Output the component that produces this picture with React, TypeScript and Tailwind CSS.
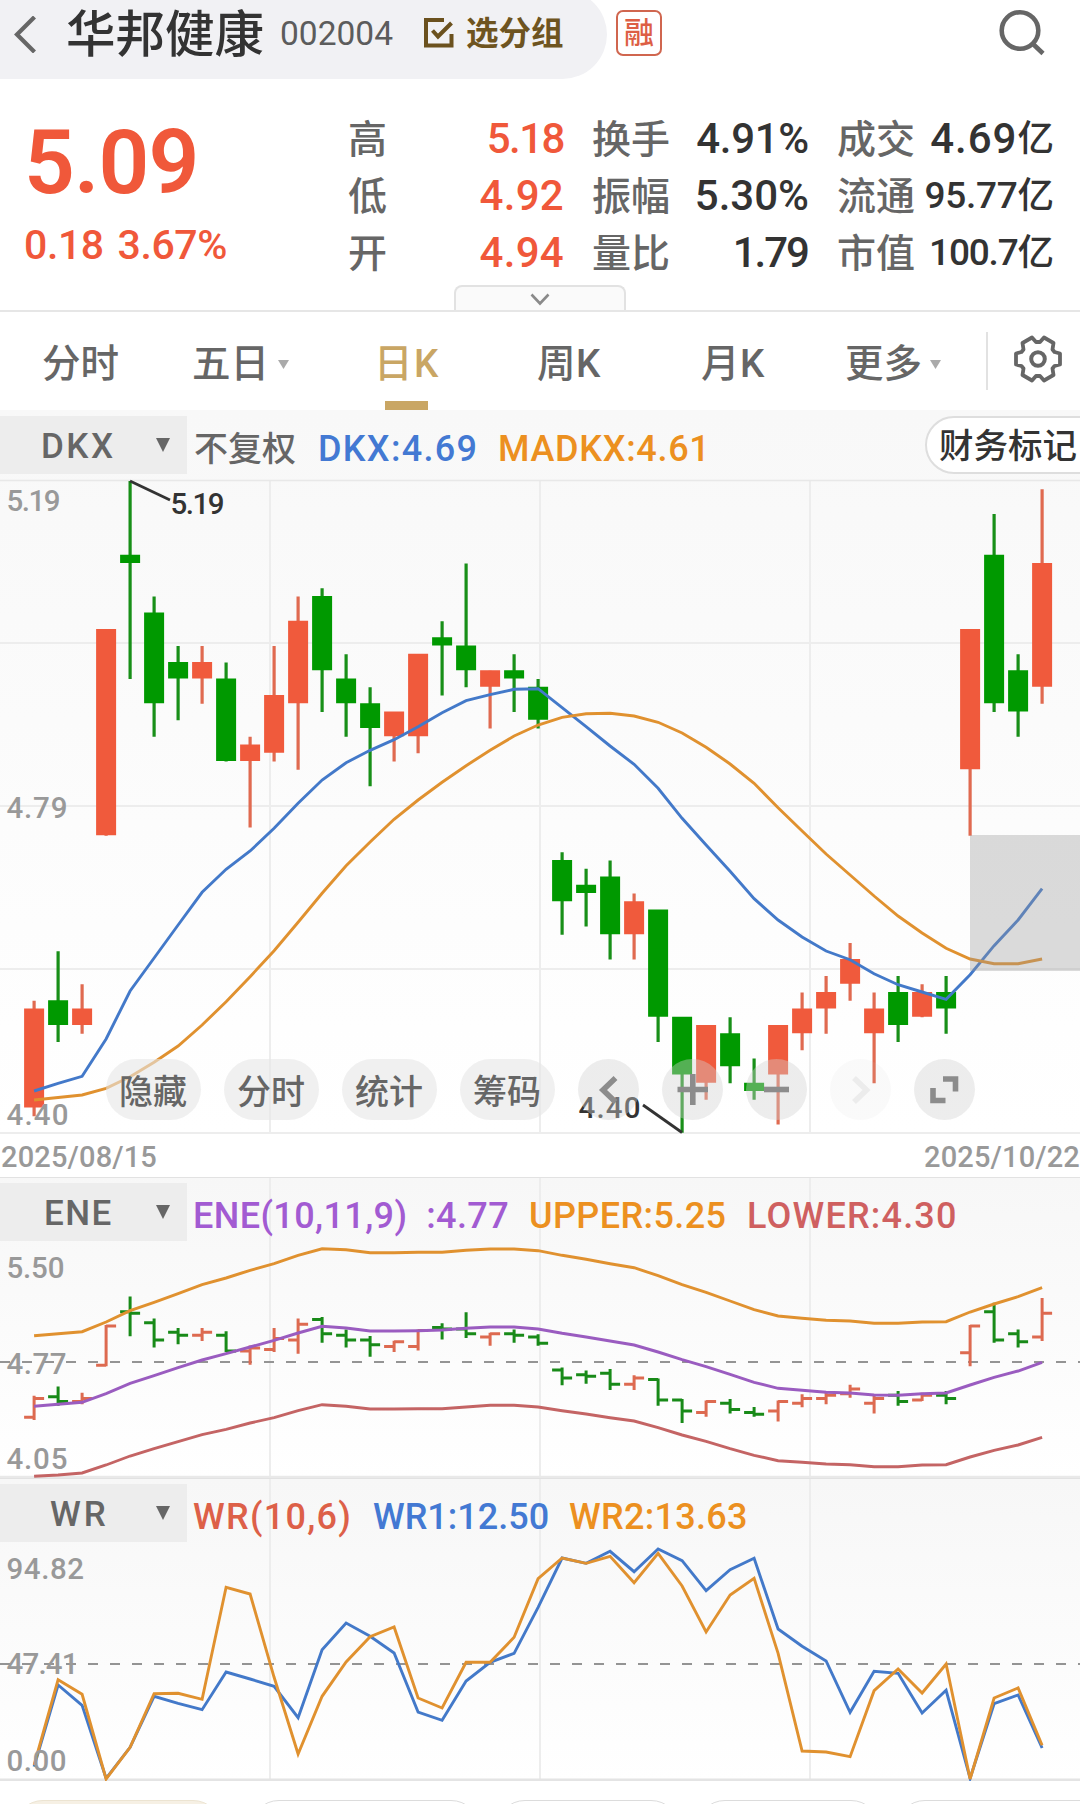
import React from "react";

const RED = "#f05a3c";
const GREEN = "#009900";
const BLUE = "#4379c9";
const ORANGE = "#e0912f";
const GRID = "#ededed";

type Candle = [rising: boolean, high: number, top: number, bottom: number, low: number];

// Distances are counted in ticks of 0.01 below 5.19.
const R = true;
const G = false;
const candles: Candle[] = [
  [R, 63, 64, 76, 77], [G, 57, 63, 66, 68], [R, 61, 64, 66, 67], [R, 18, 18, 43, 43],
  [G, 0, 9, 10, 24], [G, 14, 16, 27, 31], [G, 20, 22, 24, 29], [R, 20, 22, 24, 27],
  [G, 22, 24, 34, 34], [R, 31, 32, 34, 42], [R, 20, 26, 33, 34], [R, 14, 17, 27, 35],
  [G, 13, 14, 23, 28], [G, 21, 24, 27, 31], [G, 25, 27, 30, 37], [R, 28, 28, 31, 34],
  [R, 21, 21, 31, 33], [G, 17, 19, 20, 26], [G, 10, 20, 23, 25], [R, 23, 23, 25, 30],
  [G, 21, 23, 24, 28], [G, 24, 25, 29, 30], [G, 45, 46, 51, 55], [G, 47, 49, 50, 54],
  [G, 46, 48, 55, 58], [R, 50, 51, 55, 58], [G, 52, 52, 65, 68], [G, 65, 65, 72, 79],
  [R, 66, 66, 73, 75], [G, 65, 67, 71, 73], [G, 70, 73, 74, 75], [R, 66, 66, 72, 78],
  [R, 62, 64, 67, 69], [R, 60, 62, 64, 67], [R, 56, 58, 61, 63], [R, 62, 64, 67, 73],
  [G, 60, 62, 66, 68], [R, 61, 62, 65, 65], [G, 60, 62, 64, 67], [R, 18, 18, 35, 43],
  [G, 4, 9, 27, 28], [G, 21, 23, 28, 31], [R, 1, 10, 25, 27],
];

const dkx = [
  1091, 1083.3, 1076.3, 1039, 991, 958, 925, 892.3, 869.3, 851, 828.3, 803.3, 780, 762.7, 750.3,
  739.7, 726.7, 712.7, 700.7, 694.7, 689.3, 688.7, 707.7, 726.7, 746, 764.3, 788.3, 818.3, 845,
  871.3, 898.7, 920, 937, 951, 959.7, 973.7, 984.7, 992, 999.3, 974.7, 945.7, 920, 888.7,
];
const madkx = [
  1100, 1097.5, 1095, 1088.3, 1076.7, 1062.3, 1046, 1025, 1001.7, 976.7, 950.7, 922.3, 893.3,
  865.7, 842, 819.3, 800, 782.3, 765.7, 750.3, 736, 725, 717.3, 713.7, 713.3, 716, 722.3, 733,
  747.3, 764, 783.3, 807.7, 831, 854, 875, 896, 916, 933, 948.3, 959, 963.7, 963.7, 959,
];
const upper = [
  1335.7, 1333.7, 1331.7, 1322, 1310.7, 1302.3, 1293.7, 1284.7, 1278, 1270.3, 1263.7, 1255.3,
  1248.8, 1249.7, 1252.7, 1252.7, 1252.3, 1252.3, 1250.3, 1249, 1249, 1250.7, 1255.3, 1259.3,
  1263.7, 1267.7, 1275.7, 1284.7, 1292.3, 1301, 1309.7, 1316, 1318.3, 1320.3, 1321, 1323.3,
  1323.3, 1322, 1321.7, 1312, 1304, 1296.7, 1287.7,
];
const ene = [
  1406.3, 1404.3, 1402.3, 1393.7, 1383.3, 1375.7, 1367.7, 1360, 1353.7, 1347, 1340.3, 1333,
  1326.3, 1328, 1331, 1331, 1330.7, 1330, 1328.3, 1327, 1327, 1329, 1333.3, 1337, 1341, 1345,
  1352, 1359.7, 1366.7, 1374.3, 1382.3, 1388.3, 1390.3, 1392.3, 1393, 1395, 1395.3, 1393.7,
  1393, 1385, 1377.3, 1371, 1362.3,
];
const lower = [
  1476.3, 1475, 1473, 1465, 1456, 1448.7, 1441.7, 1434.7, 1429.3, 1423, 1417.7, 1410.7, 1404.7,
  1406.3, 1409, 1409, 1408.7, 1408.7, 1407, 1405.3, 1405.3, 1407, 1410.7, 1414, 1417.7, 1421,
  1427.7, 1435, 1441.3, 1448.7, 1455.3, 1460.7, 1462.3, 1464, 1464.7, 1466.7, 1466.7, 1465,
  1464.7, 1457, 1450.3, 1445, 1437.3,
];
const wr1 = [
  1766.7, 1685, 1705.3, 1778.3, 1747.3, 1696.3, 1703.3, 1709.7, 1672, 1679, 1686.3, 1717.7,
  1649.7, 1623, 1636.3, 1653, 1712, 1720.3, 1681, 1662.3, 1653.3, 1607.3, 1558, 1563.3, 1551.3,
  1571.7, 1549, 1560.7, 1590.7, 1569.7, 1558.3, 1629, 1646.3, 1661, 1712.3, 1671.3, 1673.3,
  1713, 1690.3, 1778.3, 1703.7, 1695, 1748,
];
const wr2 = [
  1765, 1679.7, 1694.3, 1779, 1747.3, 1693.7, 1693.3, 1699.3, 1587.3, 1594, 1677.3, 1754,
  1696.3, 1662, 1636.7, 1627, 1698, 1708, 1662.3, 1662.3, 1637.3, 1578.7, 1558, 1563.3, 1556.3,
  1582.7, 1553.3, 1586, 1632, 1595, 1578.3, 1653.3, 1751, 1752, 1756.7, 1690.7, 1669, 1693,
  1664, 1779, 1698, 1688, 1745.3,
];

const xOf = (i: number) => 34.1 + 24 * i;

function Line({ data, color, width = 2.9 }: { data: number[]; color: string; width?: number }) {
  return (
    <polyline
      points={data.map((y, i) => `${xOf(i)},${y}`).join(" ")}
      fill="none"
      stroke={color}
      strokeWidth={width}
    />
  );
}

function Label({ x, y, w, fill = "#999", children }: { x: number; y: number; w: number; fill?: string; children: string }) {
  return (
    <text x={x} y={y} textLength={w} fontSize={29.5} fontWeight={500} fill={fill}>
      {children}
    </text>
  );
}

function Grid({ top, bottom }: { top: number; bottom: number }) {
  return (
    <g stroke={GRID} strokeWidth={2}>
      {[270, 540, 810].map((x) => (
        <line key={x} x1={x} x2={x} y1={top} y2={bottom} />
      ))}
    </g>
  );
}

function CandleChart() {
  const y = (k: number) => 481 + 8.25 * k;
  return (
    <svg className="absolute inset-0 h-full w-full" viewBox="0 410 1080 767">
      <Grid top={481} bottom={1133} />
      <g stroke={GRID} strokeWidth={2}>
        {[643, 806, 969, 1133].map((v) => (
          <line key={v} x1={0} x2={1080} y1={v} y2={v} />
        ))}
      </g>
      <line x1={0} x2={1080} y1={480.5} y2={480.5} stroke="#e8e8e8" strokeWidth={1.6} />
      {candles.map(([up, h, t, b, l], i) => (
        <g key={i} fill={up ? RED : GREEN}>
          <rect x={xOf(i) - 1.6} y={y(h)} width={3.2} height={y(l) - y(h)} fill={up ? "#e06a50" : "#188f18"} />
          <rect x={xOf(i) - 10} y={y(t) - 0.5} width={20} height={y(b) - y(t)} />
        </g>
      ))}
      <Line data={dkx} color={BLUE} />
      <Line data={madkx} color={ORANGE} />
      <rect x={970} y={835} width={110} height={136} fill="#999" fillOpacity={0.35} />
      <polyline points="130,481 170,500" stroke="#333" strokeWidth={2.8} fill="none" />
      <polyline points="643,1105 682,1132.5" stroke="#333" strokeWidth={2.8} fill="none" />
      <Label x={170.5} y={513.7} w={54} fill="#333">5.19</Label>
      <Label x={578.5} y={1117.7} w={62} fill="#333">4.40</Label>
      <Label x={6.5} y={511} w={54}>5.19</Label>
      <Label x={6.5} y={818} w={61}>4.79</Label>
      <Label x={6.5} y={1125} w={62}>4.40</Label>
    </svg>
  );
}

function EneChart() {
  const y = (k: number) => 1297.5 + 1.577 * k;
  return (
    <svg className="absolute inset-0 h-full w-full" viewBox="0 1178 1080 300">
      <Grid top={1178} bottom={1478} />
      <line x1={0} x2={1080} y1={1477} y2={1477} stroke="#e9e9e9" strokeWidth={2.5} />
      <line x1={0} x2={1080} y1={1362} y2={1362} stroke="#949494" strokeWidth={2} strokeDasharray="10 12" />
      {candles.map(([up, h, t, b, l], i) => {
        const x = xOf(i);
        const open = y(up ? b : t);
        const close = y(up ? t : b);
        return (
          <path
            key={i}
            d={`M${x} ${y(h) - 1}V${y(l) + 1}M${x - 10} ${open}H${x}M${x} ${close}H${x + 10}`}
            stroke={up ? "#dd6a50" : "#188a18"}
            strokeWidth={3}
          />
        );
      })}
      <Line data={upper} color={ORANGE} />
      <Line data={ene} color="#9a5cc0" />
      <Line data={lower} color="#c46464" />
      <Label x={6.5} y={1277.7} w={58}>5.50</Label>
      <Label x={6.5} y={1374} w={60}>4.77</Label>
      <Label x={6.5} y={1469} w={61}>4.05</Label>
    </svg>
  );
}

function WrChart() {
  return (
    <svg className="absolute inset-0 h-full w-full" viewBox="0 1479 1080 302">
      <Grid top={1479} bottom={1780} />
      <line x1={0} x2={1080} y1={1779.7} y2={1779.7} stroke="#e4e4e4" strokeWidth={2.6} />
      <line x1={0} x2={1080} y1={1664} y2={1664} stroke="#949494" strokeWidth={2} strokeDasharray="10 12" />
      <Line data={wr1} color={BLUE} />
      <Line data={wr2} color={ORANGE} />
      <Label x={6.5} y={1579} w={77.5}>94.82</Label>
      <Label x={6.5} y={1674} w={72}>47.41</Label>
      <Label x={6.5} y={1770.5} w={60}>0.00</Label>
    </svg>
  );
}

function Triangle({ className }: { className: string }) {
  return (
    <svg className={className} viewBox="0 0 14 14" preserveAspectRatio="none">
      <path d="M0 0H14L7 14Z" fill="currentColor" />
    </svg>
  );
}

function Selector({ name, pad, track }: { name: string; pad: string; track: string }) {
  return (
    <div className={`flex h-[58px] w-[187px] shrink-0 items-center justify-between bg-[#ededed] pr-[17px] text-[35px] leading-none font-medium text-[#666] ${pad}`}>
      <span className={`mt-[3px] ${track}`}>{name}</span>
      <Triangle className="-mt-px h-3.5 w-3.5" />
    </div>
  );
}

type Quote = { label: string; value: string; unit?: string; tone: string; track?: string };

function QuoteColumn({ items, className }: { items: Quote[]; className: string }) {
  return (
    <div className={`flex flex-col ${className}`}>
      {items.map((q) => (
        <div key={q.label} className="flex h-[57px] items-center justify-between whitespace-nowrap">
          <span className="mt-[3px] text-[39px] leading-none font-medium text-[#666]">{q.label}</span>
          <span className={`flex items-center leading-none font-medium ${q.tone}`}>
            <span className={q.track}>{q.value}</span>
            {q.unit && <span className="mt-[2px] -mr-px text-[36.500px] tracking-normal">{q.unit}</span>}
          </span>
        </div>
      ))}
    </div>
  );
}

const hot = "text-[42px] text-[#f0583a]";
const dark = "text-[42px] text-[#333]";
const darkSmall = "text-[37px] text-[#333]";

function RoundButton({ faint, children }: { faint?: boolean; children: React.ReactNode }) {
  return (
    <div className={`flex h-[61px] w-[61px] items-center justify-center rounded-full ${faint ? "bg-[#d2d2d2]/10" : "bg-[#d2d2d2]/40"}`}>
      <svg className="h-[61px] w-[61px]" viewBox="0 0 61 61" fill="none" stroke={faint ? "#ececec" : "#8c8c8c"} strokeWidth={5.6}>
        {children}
      </svg>
    </div>
  );
}

export default function App() {
  return (
    <div className="h-[1804px] w-[1080px] overflow-hidden bg-white font-['Roboto','Noto_Sans_CJK_SC',sans-serif]">
      <header className="flex h-[79px] items-start overflow-hidden">
        <div className="-mt-[10px] flex h-[89px] w-[607px] shrink-0 items-center rounded-r-full bg-[#f1f1f4] pt-[10px] pl-[14px]">
          <svg className="-mt-[10px] h-[37px] w-[22px]" viewBox="0 0 22 37" fill="none" stroke="#666" strokeWidth="4.2">
            <path d="M20.5 1L3 18.500L20.500 36" />
          </svg>
          <h1 className="-mt-[7px] ml-[30px] w-[200px] text-[49.500px] leading-none font-medium whitespace-nowrap text-[#333]">华邦健康</h1>
          <span className="-mt-[11px] ml-[14px] w-[116px] text-[33.500px] leading-none text-[#5c5c5c]">002004</span>
          <svg className="-mt-[13px] ml-[28px] h-[30px] w-[30px] shrink-0" viewBox="0 0 30 30" fill="none" stroke="#6b511e" strokeWidth="4">
            <path d="M20 2H2V27.500H27.500V16" />
            <path d="M8.500 12.500L14 18.500L27.500 5" />
          </svg>
          <span className="-mt-[11px] ml-[12px] text-[32.500px] leading-none font-bold whitespace-nowrap text-[#6e5420]">选分组</span>
        </div>
        <div className="mt-[10px] ml-[9px] flex h-[46px] w-[46px] shrink-0 items-center justify-center rounded-[7px] border-2 border-[#d0664f] text-[30px] leading-none font-medium text-[#dd5f45]">融</div>
        <svg className="mt-[8px] ml-[336px] h-[50px] w-[50px]" viewBox="0 0 50 50" fill="none" stroke="#666" strokeWidth="4.600">
          <circle cx="22" cy="22.500" r="18.300" />
          <path d="M34.500 35.500L45 45.500" />
        </svg>
      </header>

      <section className="relative flex h-[233px] border-b-2 border-[#e6e6e6] text-[#f0583a]">
        <div className="w-[348px] pl-[24px]">
          <div className="mt-[39px] text-[89px] leading-none font-semibold tracking-[-0.8px]">5.09</div>
          <div className="mt-[18px] text-[41px] leading-none font-medium tracking-[-0.4px] whitespace-nowrap [word-spacing:4px]">0.18 3.67%</div>
        </div>
        <QuoteColumn
          className="mt-[31px] w-[216px]"
          items={[
            { label: "高", value: "5.18", tone: hot, track: "tracking-[-1.500px]" },
            { label: "低", value: "4.92", tone: hot, track: "tracking-[0.300px]" },
            { label: "开", value: "4.94", tone: hot, track: "tracking-[0.300px]" },
          ]}
        />
        <QuoteColumn
          className="mt-[31px] ml-[28px] w-[217px]"
          items={[
            { label: "换手", value: "4.91%", tone: dark, track: "tracking-[-0.300px]" },
            { label: "振幅", value: "5.30%", tone: dark },
            { label: "量比", value: "1.79", tone: dark, track: "tracking-[-2px] mr-[1px]" },
          ]}
        />
        <QuoteColumn
          className="mt-[31px] ml-[28px] w-[216px]"
          items={[
            { label: "成交", value: "4.69", unit: "亿", tone: dark, track: "tracking-[1px]" },
            { label: "流通", value: "95.77", unit: "亿", tone: darkSmall, track: "tracking-[-0.300px]" },
            { label: "市值", value: "100.7", unit: "亿", tone: darkSmall, track: "tracking-[-1.200px]" },
          ]}
        />
        <div className="absolute bottom-0 left-[454px] flex h-[25px] w-[172px] items-center justify-center rounded-t-[8px] border-2 border-b-0 border-[#e2e2e2] bg-[#fafafa]">
          <svg className="mt-px h-[13px] w-[20px]" viewBox="0 0 20 13" fill="none" stroke="#8a8a8a" strokeWidth="2.600">
            <path d="M1.500 1.500L10 10.500L18.500 1.500" />
          </svg>
        </div>
      </section>

      <nav className="flex h-[98px] items-start text-[38.500px] leading-none font-medium whitespace-nowrap text-[#666]">
        <span className="mt-[33px] ml-[42px] w-[150px]">分时</span>
        <span className="mt-[33px] flex w-[182px] items-center">
          五日<Triangle className="ml-[9px] h-[9px] w-[11px] text-[#aaa]" />
        </span>
        <span className="flex h-[98px] w-[163px] flex-col justify-between pt-[33px] tracking-[1.500px] text-[#c9a664]">
          日K
          <i className="ml-[11px] block h-[9px] w-[43px] bg-[#c9a664]" />
        </span>
        <span className="mt-[33px] w-[164px] tracking-[0.500px]">周K</span>
        <span className="mt-[33px] w-[144px] tracking-[0.500px]">月K</span>
        <span className="mt-[33px] flex w-[141px] items-center">
          更多<Triangle className="ml-[8px] h-[9px] w-[11px] text-[#aaa]" />
        </span>
        <i className="mt-[20px] block h-[58px] w-[2px] bg-[#e2e2e2]" />
        <svg className="mt-[22px] ml-[25px] h-[50px] w-[50px]" viewBox="-25 -25 50 50" fill="none" stroke="#666" strokeWidth="3.800" strokeLinejoin="round">
          <path d="M-6 -21.500L-15.500 -16L-14.500 -9.500L-16.500 -7L-22 -5.500V5.500L-16.500 7L-14.500 9.500L-15.500 16L-6 21.500L-2 17H2L6 21.500L15.500 16L14.500 9.500L16.500 7L22 5.500V-5.500L16.500 -7L14.500 -9.500L15.500 -16L6 -21.500L2 -17H-2Z" />
          <circle r="6.800" strokeWidth="4" />
        </svg>
      </nav>

      <section className="relative h-[767px] bg-white">
        <div className="h-[723px] bg-linear-to-b from-[#f8f8f8] to-white" />
        <CandleChart />
        <div className="absolute inset-x-0 top-[6px] flex h-[58px] items-center text-[36px] leading-none font-medium whitespace-nowrap">
          <Selector name="DKX" pad="pl-[41px]" track="tracking-[2.500px]" />
          <span className="mt-[8px] ml-[7px] w-[124px] text-[34px] text-[#666]">不复权</span>
          <span className="mt-[8px] w-[180px] tracking-[1.300px] text-[#4379d3]">DKX:4.69</span>
          <span className="mt-[8px] w-[427px] tracking-[0.700px] text-[#ec9020]">MADKX:4.61</span>
          <div className="-mr-[40px] flex h-[58px] w-[195px] shrink-0 items-center rounded-full border-2 border-[#dedede] bg-white pt-[3px] pl-[12px] text-[34.500px] text-[#333]">财务标记</div>
        </div>
        <div className="absolute inset-x-0 top-[649px] flex pl-[106px] text-[34px] leading-none font-medium text-[#666]">
          <div className="flex gap-[23px]">
            {["隐藏", "分时", "统计", "筹码"].map((t) => (
              <span key={t} className="flex h-[61px] w-[95px] items-center justify-center rounded-full bg-[#e6e6e6]/60 pt-[4px] pr-px whitespace-nowrap">{t}</span>
            ))}
          </div>
          <div className="ml-[23px] flex gap-[23px]">
            <RoundButton><path d="M37.500 19L25 31L37.500 43" /></RoundButton>
            <RoundButton><path d="M15.500 30.500H46M30.800 15V46" /></RoundButton>
            <RoundButton><path d="M18 30.500H43" /></RoundButton>
            <RoundButton faint><path d="M24 19L36.500 31L24 43" /></RoundButton>
            <RoundButton><path d="M29 20H41.500V32.500M19 29V41.500H31.500" /></RoundButton>
          </div>
        </div>
        <div className="absolute inset-x-0 bottom-0 flex h-[44px] items-center justify-between pt-[5px] pl-px text-[29px] leading-none font-medium tracking-[0.150px] text-[#999]">
          <span>2025/08/15</span>
          <span>2025/10/22</span>
        </div>
      </section>

      <section className="relative h-[301px] border-t border-[#e2e2e2] bg-linear-to-b from-[#f7f7f7] to-white">
        <EneChart />
        <div className="absolute inset-x-0 top-[5px] flex h-[58px] items-center text-[36px] leading-none font-medium whitespace-nowrap">
          <Selector name="ENE" pad="pl-[44px]" track="tracking-[1.400px]" />
          <span className="mt-[8px] ml-[6px] w-[336px] tracking-[0.400px] text-[#a25bd2]">ENE(10,11,9)&nbsp; :4.77</span>
          <span className="mt-[8px] w-[218px] tracking-[0.400px] text-[#ec9020]">UPPER:5.25</span>
          <span className="mt-[8px] tracking-[1.200px] text-[#cf6060]">LOWER:4.30</span>
        </div>
      </section>

      <section className="relative h-[303px] border-t border-[#e2e2e2] bg-linear-to-b from-[#f7f7f7] to-white">
        <WrChart />
        <div className="absolute inset-x-0 top-[5px] flex h-[58px] items-center text-[36px] leading-none font-medium whitespace-nowrap">
          <Selector name="WR" pad="pl-[50px]" track="tracking-[3px]" />
          <span className="mt-[8px] ml-[6px] w-[180px] tracking-[1.300px] text-[#dd6048]">WR(10,6)</span>
          <span className="mt-[8px] w-[196px] text-[#4379d3]">WR1:12.50</span>
          <span className="mt-[8px] tracking-[0.300px] text-[#ec9020]">WR2:13.63</span>
        </div>
      </section>

      <footer className="mt-[19px] flex gap-4 pl-[14px]">
        <i className="mr-[12px] h-[58px] w-[208px] shrink-0 rounded-full border border-[#ece4d2] bg-[#f6f0e4]" />
        <i className="h-[58px] w-[230px] shrink-0 rounded-full border border-[#dcdcdc]" />
        <i className="h-[58px] w-[184px] shrink-0 rounded-full border border-[#dcdcdc]" />
        <i className="h-[58px] w-[184px] shrink-0 rounded-full border border-[#dcdcdc]" />
        <i className="h-[58px] w-[220px] shrink-0 rounded-full border border-[#dcdcdc]" />
      </footer>
    </div>
  );
}
